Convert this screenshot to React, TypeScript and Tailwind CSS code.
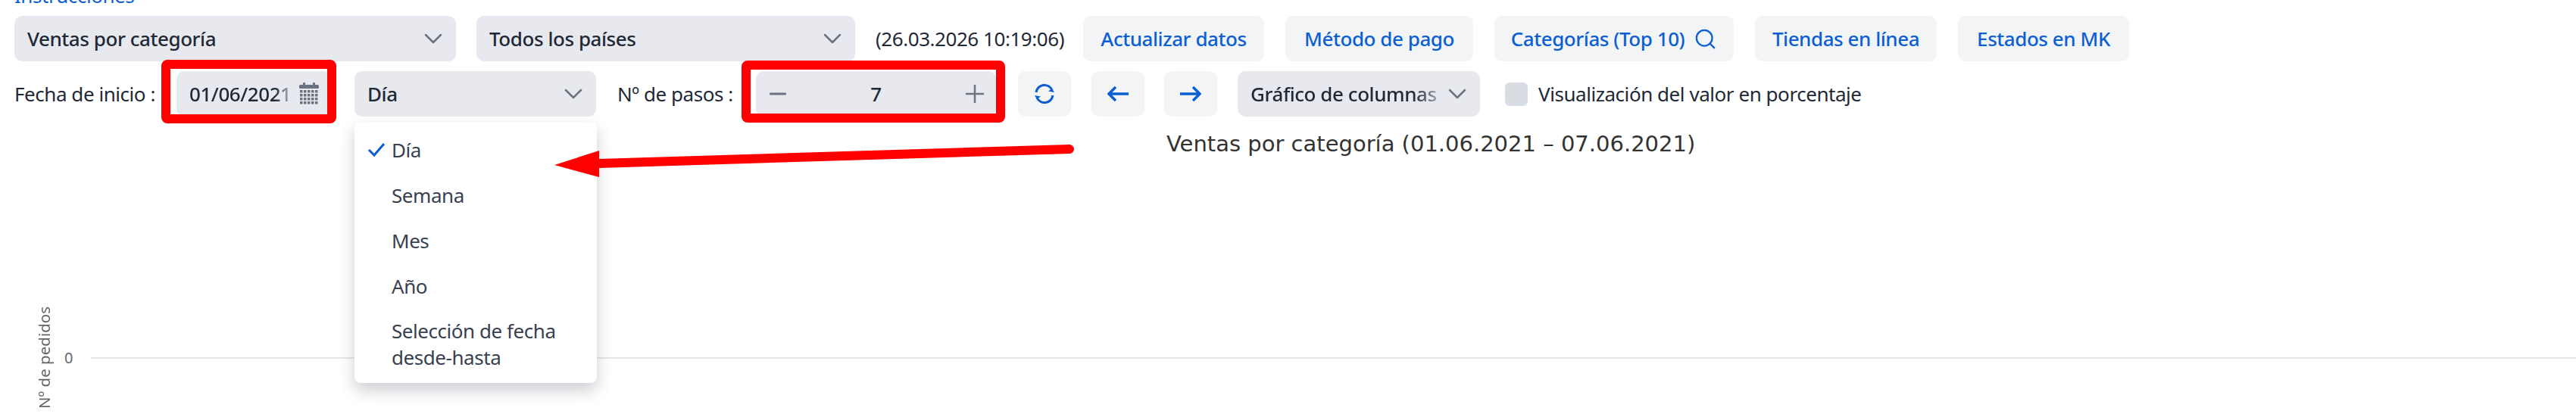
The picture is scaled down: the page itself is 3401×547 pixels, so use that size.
import { ChevronDown, Search } from "lucide-react";

const Chevron = () => (
  <ChevronDown size={40} strokeWidth={1.5} className="text-[#6b7280] shrink-0" />
);

function Sel({ w, ml, label, fade }: { w: string; ml: string; label: string; fade?: boolean }) {
  return (
    <div className={`${w} ${ml} h-[60px] shrink-0 rounded-[10px] bg-[#e7e9ee] flex items-center justify-between pl-[17px] pr-[10px] text-[26px] font-medium text-[#1f2937]`}>
      <span className={`whitespace-nowrap ${fade ? "w-[250px] overflow-hidden [mask-image:linear-gradient(to_right,black_86%,rgba(0,0,0,0.3))]" : ""}`}>{label}</span>
      <Chevron />
    </div>
  );
}

function Btn({ w, ml, children }: { w: string; ml: string; children: React.ReactNode }) {
  return (
    <button className={`${w} ${ml} h-[60px] shrink-0 rounded-[10px] bg-[#f3f4f6] flex items-center justify-center gap-[12px] text-[26px] font-medium text-[#0b5fd3]`}>
      {children}
    </button>
  );
}

export default function App() {
  return (
    <div className="relative w-[3401px] h-[547px] overflow-hidden bg-white font-['Noto_Sans',sans-serif] tracking-[-0.45px]">
      <div className="pl-[19px] -mt-[24px] h-[45px] text-[26px] leading-[36px] text-[#0b5fd3]">Instrucciones</div>

      <div className="flex items-center h-[60px]">
        <Sel w="w-[583px]" ml="ml-[19px]" label="Ventas por categoría" />
        <Sel w="w-[500px]" ml="ml-[27px]" label="Todos los países" />
        <span className="ml-[27px] w-[274px] shrink-0 whitespace-nowrap text-[26px] text-[#1f2937]">(26.03.2026 10:19:06)</span>
        <Btn w="w-[239px]" ml="">Actualizar datos</Btn>
        <Btn w="w-[248px]" ml="ml-[28px]">Método de pago</Btn>
        <Btn w="w-[316px]" ml="ml-[28px]">
          Categorías (Top 10)
          <Search size={31} strokeWidth={1.8} />
        </Btn>
        <Btn w="w-[240px]" ml="ml-[28px]">Tiendas en línea</Btn>
        <Btn w="w-[226px]" ml="ml-[28px]">Estados en MK</Btn>
      </div>

      <div className="flex items-center h-[60px] mt-[13px] text-[26px] text-[#1f2937]">
        <span className="ml-[19px] w-[214px] shrink-0 whitespace-nowrap">Fecha de inicio :</span>
        <div className="w-[204px] h-[60px] shrink-0 rounded-[10px] bg-[#e7e9ee] flex items-center pl-[17px] pr-[13px] justify-between">
          <span className="w-[132px] overflow-hidden whitespace-nowrap font-medium [mask-image:linear-gradient(to_right,black_86%,rgba(0,0,0,0.3))]">01/06/2021</span>
          <svg width="28" height="30" viewBox="0 0 28 30" className="text-[#6b7280] mr-[2px]" fill="currentColor">
            <rect x="6" y="0" width="3" height="5" rx="1" />
            <rect x="19" y="0" width="3" height="5" rx="1" />
            <rect x="1" y="3" width="26" height="5" rx="1.5" />
            {[10, 15, 20, 25].map((y) =>
              [2, 7, 12, 17, 22].map((x) => <rect key={`${x}-${y}`} x={x} y={y} width="3.5" height="3.5" />)
            )}
          </svg>
        </div>
        <Sel w="w-[319px]" ml="ml-[31px]" label="Día" />
        <span className="ml-[28px] w-[183px] shrink-0 whitespace-nowrap">Nº de pasos :</span>
        <div className="w-[317px] h-[60px] shrink-0 rounded-[10px] bg-[#e7e9ee] flex items-center justify-between pl-[18px] pr-[16px] text-[#6b7280]">
          <svg width="22" height="4" viewBox="0 0 22 4"><rect width="22" height="3" y="0.5" fill="currentColor" rx="1" /></svg>
          <span className="font-medium text-[#1f2937]">7</span>
          <svg width="24" height="24" viewBox="0 0 24 24"><path d="M12 0v24M0 12h24" stroke="currentColor" strokeWidth="2.5" /></svg>
        </div>
        <Btn w="w-[70px]" ml="ml-[29px]">
          <svg width="30" height="30" viewBox="0 0 30 30" fill="none" stroke="currentColor" strokeWidth="3">
            <path d="M4 13a11 11 0 0 1 21-3" />
            <path d="M26 17a11 11 0 0 1-21 3" />
            <path d="M28 13l-3-5-5 3.500z" fill="currentColor" strokeWidth="0" />
            <path d="M2 17l3 5 5-3.500z" fill="currentColor" strokeWidth="0" />
          </svg>
        </Btn>
        <Btn w="w-[70px]" ml="ml-[27px]">
          <svg width="28" height="22" viewBox="0 0 28 22" fill="none" stroke="currentColor" strokeWidth="3.5">
            <path d="M28 11H3M11 2l-9 9 9 9" />
          </svg>
        </Btn>
        <Btn w="w-[70px]" ml="ml-[26px]">
          <svg width="28" height="22" viewBox="0 0 28 22" fill="none" stroke="currentColor" strokeWidth="3.5">
            <path d="M0 11h25M17 2l9 9-9 9" />
          </svg>
        </Btn>
        <Sel w="w-[320px]" ml="ml-[27px]" label="Gráfico de columnas" fade />
        <span className="ml-[33px] w-[30px] h-[31px] shrink-0 rounded-[6px] bg-[#d8dce3]" />
        <span className="ml-[14px] whitespace-nowrap">Visualización del valor en porcentaje</span>
      </div>

      <div className="pl-[1540px] mt-[15px] h-[42px] leading-[42px] text-[29px] tracking-normal font-['DejaVu_Sans',sans-serif] text-[#333333] whitespace-nowrap">
        Ventas por categoría (01.06.2021 – 07.06.2021)
      </div>

      <div className="flex items-center h-[140px] mt-[192px] text-[#666666] tracking-normal">
        <span className="ml-[48px] w-[20px] [writing-mode:vertical-rl] rotate-180 text-[20.5px] leading-[20px] text-center whitespace-nowrap">Nº de pedidos</span>
        <span className="ml-[17px] w-[35px] text-[20px] text-[#666666]">0</span>
        <div className="flex-1 h-[2px] bg-[#e6e6e6]" />
      </div>

      <div className="absolute left-[468px] top-[161px] w-[320px] h-[345px] rounded-[8px] bg-white shadow-[0_10px_20px_rgba(55,65,81,0.25)] text-[26px] text-[#374151]">
        <div className="flex flex-col pt-[7px]">
          {["Día", "Semana", "Mes", "Año"].map((t, i) => (
            <div key={t} className="relative h-[60px] leading-[60px] pl-[49px]">
              {i === 0 && (
                <svg className="absolute left-[17px] top-[20px]" width="24" height="20" viewBox="0 0 24 20" fill="none" stroke="#0b5fd3" strokeWidth="3">
                  <path d="M2 10l7 7L22 2" />
                </svg>
              )}
              {t}
            </div>
          ))}
          <div className="pl-[49px] pt-[12px] leading-[35px]">Selección de fecha<br />desde-hasta</div>
        </div>
      </div>

      <div className="absolute left-[213px] top-[79px] w-[231px] h-[84px] border-[12px] border-[#ff0000] rounded-[8px]" />
      <div className="absolute left-[979px] top-[80px] w-[348px] h-[82px] border-[12px] border-[#ff0000] rounded-[8px]" />
      <svg className="absolute left-0 top-0" width="3401" height="547" fill="none">
        <path d="M1412 197L790 216" stroke="#ff0000" strokeWidth="12" strokeLinecap="round" />
        <path d="M732 218L791 199V234z" fill="#ff0000" />
      </svg>
    </div>
  );
}
